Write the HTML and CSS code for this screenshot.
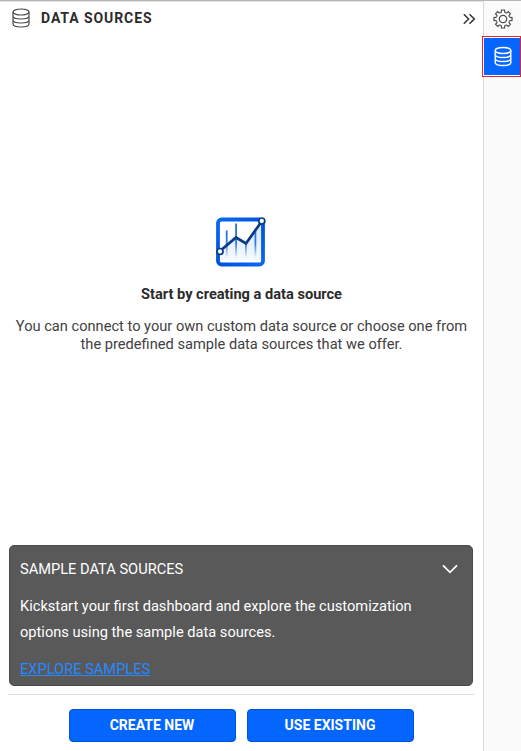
FILE: index.html
```html
<!DOCTYPE html>
<html lang="en">
<head>
<meta charset="utf-8">
<title>Data Sources</title>
<link rel="stylesheet" href="styles.css">
</head>
<body>
<div class="app">
  <main class="panel">
    <header class="header">
      <svg class="db" width="18" height="20" viewBox="0 0 18 20"><ellipse cx="9" cy="4" rx="8" ry="3"/><path d="M1 4v12c0 4 16 4 16 0V4M1 8c0 4 16 4 16 0M1 12c0 4 16 4 16 0"/></svg>
      <h1>DATA SOURCES</h1>
      <svg class="collapse" width="14" height="12" viewBox="0 0 14 12"><path d="M1.800 1.200 6.600 6l-4.800 4.800M7.500 1.200 12.300 6l-4.800 4.800"/></svg>
    </header>
    <section class="empty">
      <svg class="chart" width="52" height="52" viewBox="0 0 52 52">
        <defs>
          <linearGradient id="frame" x1="0" y1="0" x2="1" y2="1"><stop stop-color="#0869f5"/><stop offset=".5" stop-color="#0052d9"/><stop offset="1" stop-color="#0869f5"/></linearGradient>
          <linearGradient id="fill" x1="0" y1="0" x2="0" y2="1"><stop stop-color="#d2e3fb"/><stop offset="1" stop-color="#f7faff"/></linearGradient>
          <linearGradient id="bar" gradientUnits="userSpaceOnUse" x1="0" y1="12" x2="0" y2="42"><stop stop-color="#286fda"/><stop offset=".55" stop-color="#327bdd"/><stop offset="1" stop-color="#327bdd" stop-opacity=".05"/></linearGradient>
        </defs>
        <rect x="3" y="4.500" width="45" height="45" rx="3.500" fill="#fff" stroke="url(#frame)" stroke-width="3.800"/>
        <path d="M5 36 21 22.500 31 28.500 46 7V45H5Z" fill="url(#fill)"/>
        <path d="M10.800 15.500h1.800v28h-1.800zM20.200 8.500H22v35h-1.800zM30 28h1.800v15.500H30zM39.500 16h1.800v27.500h-1.800z" fill="url(#bar)"/>
        <path d="M5 36 21 22.500 31 28.500 47 6" fill="none" stroke="#073b86" stroke-width="2.700"/>
        <circle cx="5" cy="36.500" r="3" fill="#fff" stroke="#073b86" stroke-width="1.700"/><circle cx="46.800" cy="6" r="3" fill="#fff" stroke="#073b86" stroke-width="1.700"/>
      </svg>
      <h2>Start by creating a data source</h2>
      <p>You can connect to your own custom data source or choose one from<br>the predefined sample data sources that we offer.</p>
    </section>
    <section class="samples">
      <div class="samples-head"><h3>SAMPLE DATA SOURCES</h3><svg width="16" height="10" viewBox="0 0 16 10"><path d="m1 1.300 7 7 7-7"/></svg></div>
      <p>Kickstart your first dashboard and explore the customization<br>options using the sample data sources.</p>
      <a href="#">EXPLORE SAMPLES</a>
    </section>
    <footer class="actions"><button class="create">CREATE NEW</button><button class="existing">USE EXISTING</button></footer>
  </main>
  <aside class="rail">
    <svg class="gear" width="20" height="20" viewBox="-10 -10 20 20">
      <defs><path id="tooth" d="M-2.680-6.470Q-1.800-6.200-1.700-7.200L-1.500-9H1.500L1.700-7.200Q1.800-6.200 2.680-6.470"/></defs>
      <use href="#tooth"/><use href="#tooth" transform="rotate(45)"/><use href="#tooth" transform="rotate(90)"/><use href="#tooth" transform="rotate(135)"/><use href="#tooth" transform="rotate(180)"/><use href="#tooth" transform="rotate(225)"/><use href="#tooth" transform="rotate(270)"/><use href="#tooth" transform="rotate(315)"/>
      <circle r="3.700"/>
    </svg>
    <div class="active"><svg class="db" width="18" height="20" viewBox="0 0 18 20"><ellipse cx="9" cy="4" rx="7.800" ry="3"/><path d="M1.200 4v12c0 4 15.600 4 15.600 0V4M1.200 8c0 4 15.600 4 15.600 0M1.200 12c0 4 15.600 4 15.600 0"/></svg></div>
  </aside>
</div>
</body>
</html>
```
FILE: styles.css
```css
* { box-sizing: border-box; }
body { margin: 0; font-family: Roboto, sans-serif; color: #2b2b2b; background: #fff; }
h1, h2, h3, p { margin: 0; }
svg { display: block; fill: none; }
.app { display: flex; width: 521px; height: 751px; border-top: 1px solid #b5b5b5; box-shadow: inset 0 1px #e5e5e5; overflow: hidden; }
.panel { width: 483px; display: flex; flex-direction: column; }
.header { height: 34px; display: flex; align-items: center; padding: 0 7px 0 12px; }
.db { stroke: #4c4c4c; stroke-width: 1.2; }
.header h1 { margin-left: 11px; font-size: 14px; line-height: 20px; font-weight: 700; letter-spacing: .92px; }
.collapse { margin: 2px 0 0 auto; stroke: #333; stroke-width: 1.5; }
.empty { flex: 1; display: flex; flex-direction: column; align-items: center; padding-top: 180px; text-align: center; }
.chart { margin-right: 2px; }
.empty h2 { margin-top: 15px; font-size: 14.6px; line-height: 24px; font-weight: 700; }
.empty p { margin-top: 12px; font-size: 14.63px; line-height: 17.5px; color: #414141; white-space: nowrap; }
.samples { height: 141px; margin: 0 10px 8px 9px; padding: 10px; border: 1px solid #4a4a4a; border-radius: 5px; background: #595959; color: #fff; font-size: 14.63px; }
.samples-head { display: flex; height: 26px; align-items: center; justify-content: space-between; padding-right: 4px; }
.samples-head h3 { font-size: 14.63px; font-weight: 400; }
.samples-head svg { stroke: #fff; stroke-width: 1.8; }
.samples p { margin-top: 11px; line-height: 26px; white-space: nowrap; }
.samples a { display: inline-block; margin-top: 14px; line-height: 20px; color: #2589ff; }
.actions { height: 57px; margin: 0 9px 0 8px; border-top: 1px solid #dedede; display: flex; justify-content: center; gap: 11px; padding: 14px 0 0; }
.actions button { width: 167px; height: 33px; padding: 0 0 1px; border: 1px solid #0053d8; border-radius: 4px; background: #0565ff; color: #fff; font: 700 14px/20px Roboto, sans-serif; }
.rail { width: 38px; border-left: 1px solid #d8d8d8; background: #fbfbfb; }
.gear { margin: 8px 0 0 9px; stroke: #4a4a4a; stroke-width: 1.2; }
.active { width: 39px; height: 41px; margin: 7px 0 0 -2px; border: 1px solid #e52235; padding: 1px 0 1px 1px; background: #fff; position: relative; }
.active .db { width: 36px; height: 37px; padding: 8px 8px 8px 10px; background: #0565ff; stroke: #fff; stroke-width: 1.4; }
```
